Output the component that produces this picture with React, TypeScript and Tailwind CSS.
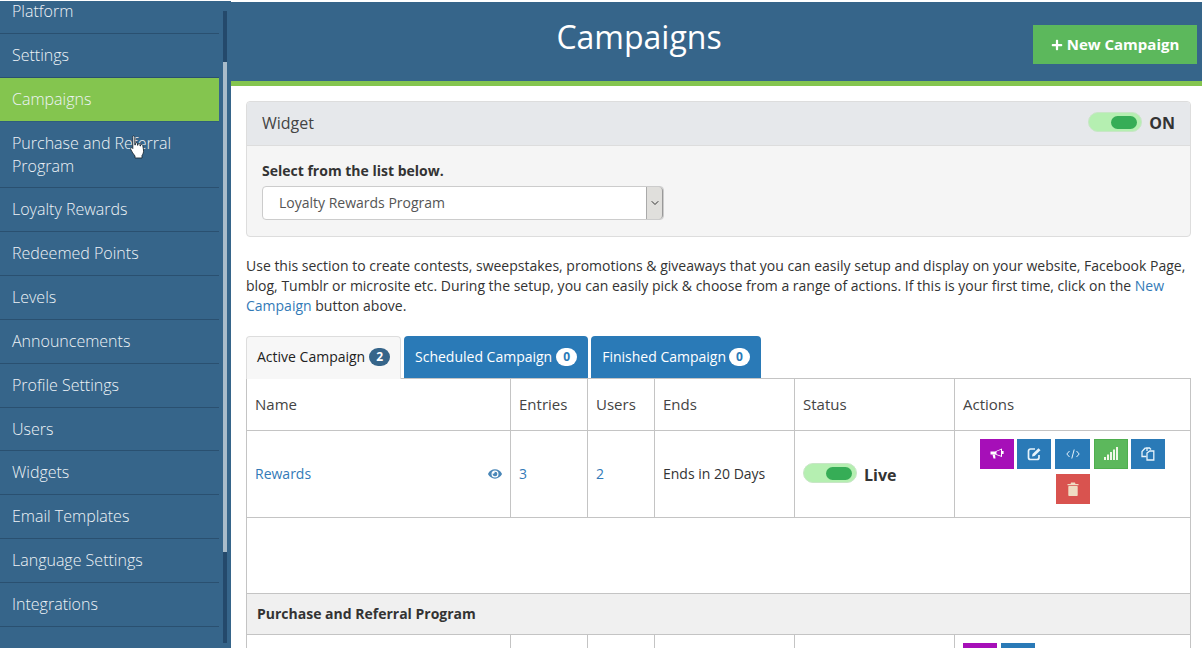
import { FaPlus, FaEye } from "react-icons/fa";
import { ChevronDown } from "lucide-react";
import type { ReactNode } from "react";

const items: { label: string; active?: boolean }[] = [
  { label: "Settings" },
  { label: "Campaigns", active: true },
  { label: "Purchase and Referral Program" },
  { label: "Loyalty Rewards" },
  { label: "Redeemed Points" },
  { label: "Levels" },
  { label: "Announcements" },
  { label: "Profile Settings" },
  { label: "Users" },
  { label: "Widgets" },
  { label: "Email Templates" },
  { label: "Language Settings" },
  { label: "Integrations" },
];

function Toggle() {
  return (
    <span className="-mt-[3px] flex h-[20px] w-[54px] items-center justify-end rounded-full border border-[#c8e6c6] bg-[#b5efb1] pr-[4px]">
      <span className="h-[13px] w-[26px] rounded-full bg-[#36ad56]" />
    </span>
  );
}

function Tab({ label, count, active, gap }: { label: string; count: number; active?: boolean; gap?: string }) {
  if (active) {
    return (
      <div className="-mb-px flex h-[43px] w-[155px] items-center gap-[4px] rounded-t border border-b-0 border-[#dddddd] bg-[#f7f7f7] pb-[2px] pl-[10px] text-[#222]">
        {label}
        <span className="flex h-[18px] min-w-[21px] items-center justify-center rounded-full bg-[#36658a] text-[12px] font-bold text-white">{count}</span>
      </div>
    );
  }
  return (
    <div className={`flex h-[42px] items-center rounded-t bg-[#2a7ab7] px-[11px] text-white ${gap ?? "gap-[4px]"}`}>
      {label}
      <span className="flex h-[18px] min-w-[21px] items-center justify-center rounded-full bg-white text-[12px] font-bold text-[#2a7ab7]">{count}</span>
    </div>
  );
}

function Action({ className, children }: { className: string; children: ReactNode }) {
  return <span className={`flex h-[30px] items-center justify-center text-white ${className}`}>{children}</span>;
}

function Bullhorn() {
  return (
    <svg width="14" height="13" viewBox="0 0 14 13" fill="none">
      <path d="M0.5 4.500H5L12 1.500V10L5 7.500H0.500Z" fill="#fff" />
      <path d="M6.500 4.500L11 2.800V8.700L6.500 7.200Z" fill="#a60fb8" />
      <path d="M2.500 7.500H5L5.500 11.500H3.500Z" fill="#fff" />
      <rect x="12" y="4" width="1.600" height="3" fill="#fff" />
    </svg>
  );
}

function PencilSquare() {
  return (
    <svg width="15" height="14" viewBox="0 0 15 14" fill="none">
      <path d="M8 2H3.500A2 2 0 0 0 1.500 4V10.500A2 2 0 0 0 3.500 12.500H10A2 2 0 0 0 12 10.500V8" stroke="#e6f3fb" strokeWidth="1.700" />
      <path d="M5 9.500L5.500 7L11.500 1.200L13.500 3.200L7.500 9Z" fill="#e6f3fb" />
    </svg>
  );
}

function CodeIcon() {
  return (
    <svg width="14" height="10" viewBox="0 0 14 10" fill="none" stroke="#e6f3fb" strokeWidth="1">
      <path d="M3.500 2L0.800 5L3.500 8" />
      <path d="M10.500 2L13.200 5L10.500 8" />
      <path d="M8.200 0.500L5.800 9.500" />
    </svg>
  );
}

function SignalBars() {
  return (
    <svg width="14" height="13" viewBox="0 0 14 13" fill="#f2f7e8">
      <rect x="0" y="10" width="2" height="3" />
      <rect x="3" y="7.500" width="2" height="5.500" />
      <rect x="6" y="5" width="2" height="8" />
      <rect x="9" y="2.500" width="2" height="10.500" />
      <rect x="12" y="0" width="2" height="13" />
    </svg>
  );
}

function Files() {
  return (
    <svg width="14" height="14" viewBox="0 0 14 14" fill="none" stroke="#e6f3fb" strokeWidth="1.300">
      <path d="M6 4V1H8.500L10 2.500" />
      <path d="M5.500 9.500H1V4.500L4 1.200H6" />
      <path d="M6 6L8.800 4H12.800V13H6V6Z" />
    </svg>
  );
}

function Trash() {
  return (
    <svg width="12" height="14" viewBox="0 0 12 14" fill="#efdcc2">
      <path d="M4 0.500H8L8.500 2H11.500V3.300H0.500V2H3.500Z" />
      <rect x="1.300" y="4" width="9.400" height="10" rx="0.700" />
    </svg>
  );
}

export default function App() {
  const cell = "border border-[#c4c4c4]";
  return (
    <div className="flex h-[648px] w-[1202px] overflow-hidden bg-white font-['Open_Sans',sans-serif] text-[14px] leading-[1.42857] text-[#333]">
      <aside className="relative flex w-[231px] shrink-0 border-t border-white bg-[#36658a]">
        <nav className="w-[219px] shrink-0 text-[16px] font-light text-[#eef3f7]">
          <div className="border-b border-[#2a5070] px-[12px] pb-[10px] pt-0 leading-[22.857px] h-[34px]">
            <span className="block -mt-[1px]">Platform</span>
          </div>
          {items.map((i) => (
            <div
              key={i.label}
              className={`border-b px-[12px] py-[10px] ${i.active ? "border-[#2f5d7e] bg-[#84c54f]" : "border-[#2a5070]"}`}
            >
              {i.label}
            </div>
          ))}
        </nav>
        <div className="ml-[4px] mt-[10px] flex h-[632px] w-[4px] flex-col">
          <div className="h-[51px] bg-[#24496b]" />
          <div className="h-[490px] bg-[#a9bcca]" />
          <div className="h-[91px] bg-[#24496b]" />
        </div>
        <svg className="absolute left-[130px] top-[134px]" width="15" height="24" viewBox="0 0 15 24">
          <path
            d="M2.500 1.500C3.500 .5 4.700 1 4.800 2.200V10L5.500 9.800V8.500C6 7.500 7 7.500 7.500 8.500V10.200H8V9C8.500 8 9.500 8 10 9V11H10.500V10C11 9.200 12.500 9.500 12.800 10.500L13.500 15C13.800 17.500 13 19 12 20.500V23H5V21C3.500 19 1.800 17 .8 14.500C.3 13 1.500 12 2.300 13L2.800 13.500V2.500Z"
            fill="#fff"
            stroke="#1c2a36"
            strokeWidth="0.900"
          />
        </svg>
      </aside>

      <main className="flex min-w-0 flex-1 flex-col pt-[2px]">
        <header className="relative flex h-[84px] shrink-0 items-start justify-center border-b-[5px] border-[#84c54f] bg-[#36658a]">
          <h1 className="mt-[13px] pr-[155px] text-[32px] leading-[44px] text-white">Campaigns</h1>
          <button className="absolute right-[5px] top-[23px] flex h-[39px] w-[164px] items-center justify-center gap-[4px] bg-[#5cb85c] text-[15px] font-bold text-white">
            <FaPlus className="text-[12px]" />
            New Campaign
          </button>
        </header>

        <div className="px-[15px] pt-[15px]">
          <section className="w-[945px] rounded border border-[#dddddd] bg-[#f5f5f5]">
            <div className="flex h-[44px] items-center justify-between rounded-t border-b border-[#dddddd] bg-[#e6e8eb] pl-[15px] pr-[15px] text-[16px] text-[#444]">
              <span>Widget</span>
              <span className="flex items-center gap-[7px] font-bold text-[#333]">
                <Toggle />
                ON
              </span>
            </div>
            <div className="h-[90px] px-[15px] pt-[15px]">
              <label className="block font-bold leading-[20px]">Select from the list below.</label>
              <div className="mt-[5px] flex h-[34px] w-[402px] items-center justify-between rounded border border-[#cccccc] bg-white pl-[16px] text-[#555]">
                Loyalty Rewards Program
                <span className="flex h-full w-[17px] items-center justify-center rounded-r border-x border-l-[#aaa] border-r-[#999] bg-[#e0dfdc]">
                  <ChevronDown size={12} className="text-[#333]" />
                </span>
              </div>
            </div>
          </section>

          <p className="mt-[19px] w-[945px]">
            Use this section to create contests, sweepstakes, promotions &amp; giveaways that you can easily setup and display on your website, Facebook Page, blog, Tumblr or microsite etc. During the setup, you can easily pick &amp; choose from a range of actions. If this is your first time, click on the <span className="text-[#337ab7]">New Campaign</span> button above.
          </p>

          <div className="mt-[20px] flex w-[945px] items-end gap-[3px]">
            <Tab label="Active Campaign" count={2} active />
            <Tab label="Scheduled Campaign" count={0} />
            <Tab label="Finished Campaign" count={0} gap="gap-[3px]" />
          </div>

          <table className="w-[945px] table-fixed border-collapse border border-[#c4c4c4]">
            <colgroup>
              <col className="w-[264px]" />
              <col className="w-[77px]" />
              <col className="w-[67px]" />
              <col className="w-[140px]" />
              <col className="w-[160px]" />
              <col />
            </colgroup>
            <thead>
              <tr className="h-[52px] text-[15px] text-[#444]">
                {["Name", "Entries", "Users", "Ends", "Status", "Actions"].map((h) => (
                  <th key={h} className={`${cell} px-[8px] text-left font-normal`}>{h}</th>
                ))}
              </tr>
            </thead>
            <tbody>
              <tr className="h-[87px]">
                <td className={`${cell} px-[8px]`}>
                  <span className="flex items-center justify-between text-[#337ab7]">
                    Rewards
                    <FaEye className="text-[14px] text-[#4a87b8]" />
                  </span>
                </td>
                <td className={`${cell} px-[8px] text-[#337ab7]`}>3</td>
                <td className={`${cell} px-[8px] text-[#337ab7]`}>2</td>
                <td className={`${cell} px-[8px]`}>Ends in 20 Days</td>
                <td className={`${cell} px-[8px]`}>
                  <span className="flex items-center gap-[7px] pt-[2px] text-[16px] font-bold">
                    <Toggle />
                    Live
                  </span>
                </td>
                <td className={`${cell} px-[8px]`}>
                  <div className="flex flex-col items-center gap-[5px] pb-[5px]">
                    <div className="flex">
                      <Action className="w-[34px] bg-[#a60fb8]"><Bullhorn /></Action>
                      <Action className="ml-[3px] w-[34px] bg-[#2a7ab7]"><PencilSquare /></Action>
                      <Action className="ml-[4px] w-[35px] bg-[#2a7ab7]"><CodeIcon /></Action>
                      <Action className="ml-[4px] w-[34px] border border-[#4fae4f] bg-[#5cb85c]"><SignalBars /></Action>
                      <Action className="ml-[3px] w-[34px] bg-[#2a7ab7]"><Files /></Action>
                    </div>
                    <Action className="w-[34px] bg-[#d9534f]"><Trash /></Action>
                  </div>
                </td>
              </tr>
              <tr className="h-[76px]"><td colSpan={6} className={cell} /></tr>
              <tr className="h-[41px] bg-[#f0f0f0]">
                <td colSpan={6} className={`${cell} px-[10px] font-bold`}>Purchase and Referral Program</td>
              </tr>
              <tr className="h-[60px]">
                <td className={cell} />
                <td className={cell} />
                <td className={cell} />
                <td className={cell} />
                <td className={cell} />
                <td className={`${cell} px-[8px] pt-[8px] align-top`}>
                  <div className="flex gap-[4px]">
                    <Action className="w-[34px] bg-[#a60fb8]"><Bullhorn /></Action>
                    <Action className="w-[34px] bg-[#2a7ab7]"><PencilSquare /></Action>
                  </div>
                </td>
              </tr>
            </tbody>
          </table>
        </div>
      </main>
    </div>
  );
}
